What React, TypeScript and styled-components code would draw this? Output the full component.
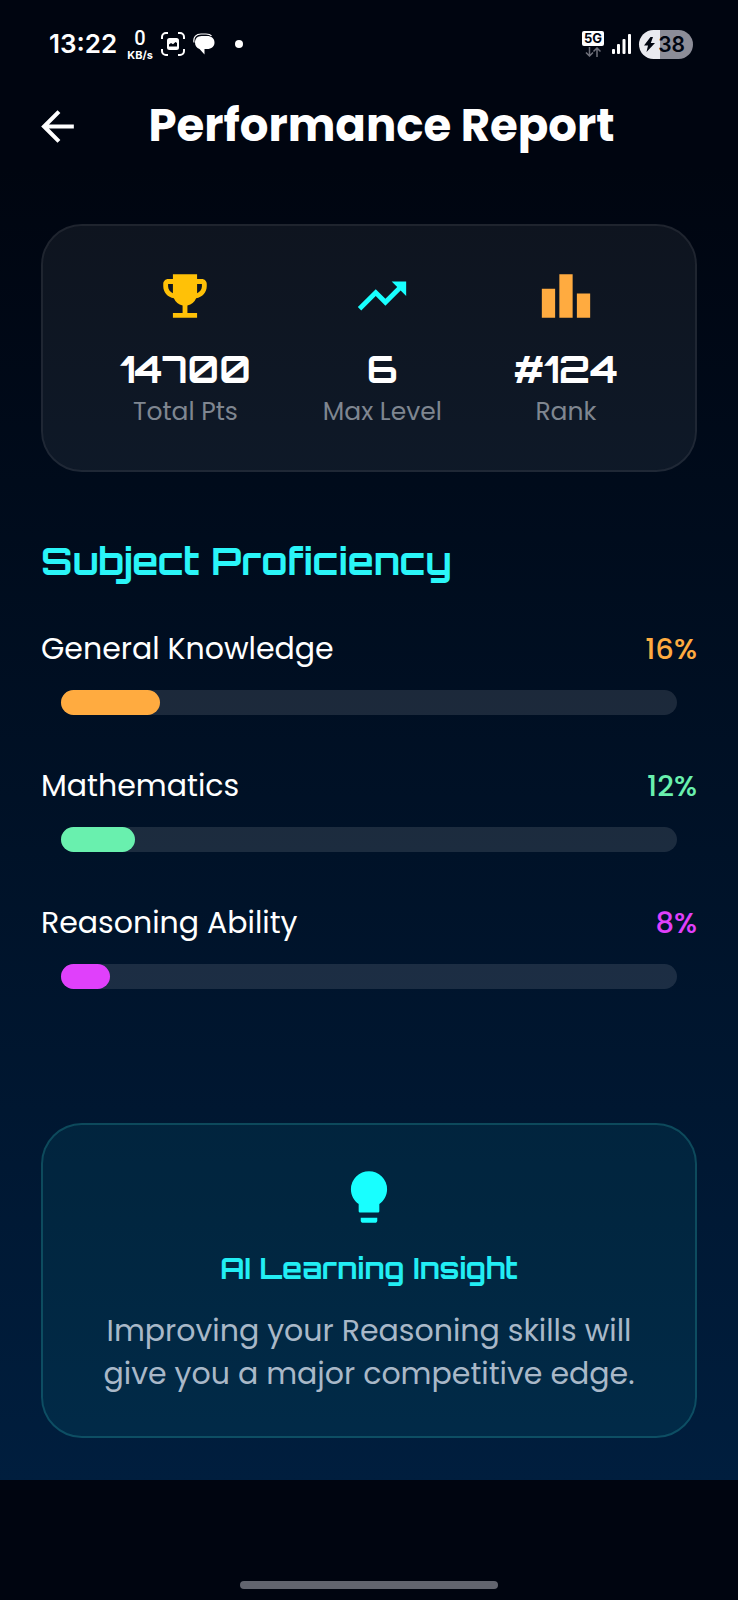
import React from 'react';
import styled, { createGlobalStyle } from 'styled-components';
import { MdArrowBack, MdEmojiEvents, MdLeaderboard, MdTrendingUp } from 'react-icons/md';

const bodyFont = 'Poppins, Inter, "Open Sans", sans-serif';
const displayFont = 'Orbitron, "DejaVu Sans", sans-serif';

const GlobalStyle = createGlobalStyle`
  *, *::before, *::after { box-sizing: border-box; }
  body { margin: 0; background: #000510; }
  h1, h2, h3, p, dl, dt, dd, ul { margin: 0; padding: 0; }
`;

const Screen = styled.div`
  display: flex;
  flex-direction: column;
  min-height: 100vh;
  background: #000510;
  color: #fff;
  font-family: ${bodyFont};
  font-weight: 400;
`;

const StatusBar = styled.div`
  display: flex;
  align-items: center;
  justify-content: space-between;
  height: 84px;
  padding: 4px 45px 0 49px;
`;

const StatusGroup = styled.div<{ $gap: number }>`
  display: flex;
  align-items: center;
  gap: ${(p) => p.$gap}px;

  svg { display: block; }
`;

const Clock = styled.span`
  font: 600 26px/32px Inter, sans-serif;
`;

const NetSpeed = styled.span`
  display: flex;
  flex-direction: column;
  align-items: center;
  margin-left: 2px;
  font: 700 11px/12px Inter, sans-serif;
`;

const NetValue = styled.span`
  font: 500 20px/22px Roboto, sans-serif;
`;

const Dot = styled.span`
  width: 8px;
  height: 8px;
  margin-left: 12px;
  border-radius: 50%;
  background: #fff;
`;

const Network = styled.span`
  display: flex;
  flex-direction: column;
  align-items: center;
  gap: 1px;
`;

const NetworkBadge = styled.span`
  width: 22px;
  border-radius: 2px;
  background: #fff;
  color: #000510;
  font: 700 13px/15px Inter, sans-serif;
  text-align: center;
`;

const Battery = styled.span`
  display: flex;
  align-items: center;
  justify-content: space-between;
  width: 54px;
  height: 29px;
  padding: 0 8px 0 5px;
  border-radius: 15px;
  background: linear-gradient(90deg, #e9eaf0 38%, #8c8d98 38%);
  color: #000510;
  font: 600 21px/29px Inter, sans-serif;
`;

const Header = styled.header`
  display: flex;
  align-items: center;
  height: 84px;
  padding: 0 57px 0 33px;
`;

const BackButton = styled.button`
  display: flex;
  padding: 0;
  border: 0;
  background: none;
  color: #fff;
  cursor: pointer;
`;

const Title = styled.h1`
  flex: 1;
  font: 700 45px/60px ${bodyFont};
  text-align: center;
  white-space: nowrap;
`;

const Main = styled.main`
  padding: 56px 41px 42px;
  background: linear-gradient(180deg, #000510, #001e3e);
`;

const Card = styled.section<{ $tone: 'glass' | 'accent' }>`
  padding: 41px;
  border: 2px solid ${(p) => (p.$tone === 'accent' ? 'rgba(60, 255, 240, 0.22)' : 'rgba(255, 255, 255, 0.12)')};
  border-radius: 41px;
  background: ${(p) => (p.$tone === 'accent' ? 'rgba(24, 255, 255, 0.06)' : 'rgba(235, 255, 255, 0.06)')};
  background-clip: padding-box;
`;

const StatList = styled.dl`
  display: flex;
  justify-content: space-around;
`;

const Stat = styled.div<{ $color: string }>`
  display: flex;
  flex-direction: column;
  align-items: center;

  svg {
    display: block;
    order: -2;
    margin-bottom: 20px;
    color: ${(p) => p.$color};
  }
`;

const StatLabel = styled.dt`
  margin-top: 2px;
  color: #7f8690;
  font-size: 25px;
  line-height: 34px;
`;

const StatValue = styled.dd`
  order: -1;
  font: 700 38px/48px ${displayFont};
`;

const SectionTitle = styled.h2`
  margin: 65px 0 42px;
  color: #2af5f8;
  font: 700 38px/48px ${displayFont};
`;

const SubjectList = styled.ul`
  display: flex;
  flex-direction: column;
  gap: 49px;
  margin-bottom: 134px;
  list-style: none;
`;

const SubjectHead = styled.div`
  display: flex;
  justify-content: space-between;
  margin-bottom: 19px;
  font-size: 30px;
  line-height: 44px;
`;

const Percent = styled.span<{ $color: string }>`
  color: ${(p) => p.$color};
  font-size: 29px;
  font-weight: 500;
`;

const Track = styled.div`
  height: 25px;
  margin: 0 20px;
  border-radius: 13px;
  background: rgba(255, 255, 255, 0.11);
`;

const Fill = styled.div<{ $color: string }>`
  height: 100%;
  border-radius: 13px;
  background: ${(p) => p.$color};
`;

const Insight = styled(Card)`
  display: flex;
  flex-direction: column;
  align-items: center;
  text-align: center;
`;

const InsightTitle = styled.h3`
  margin: 20px 0 21px;
  color: #22eef4;
  font: 700 29px/40px ${displayFont};
`;

const InsightText = styled.p`
  color: #a9b8c8;
  font-size: 30px;
  line-height: 43px;
`;

const GestureArea = styled.footer`
  display: flex;
  flex: 1;
  align-items: flex-end;
  justify-content: center;
  min-height: 100px;
  padding-bottom: 11px;
`;

const GestureHandle = styled.div`
  width: 35%;
  height: 8px;
  border-radius: 4px;
  background: #62656f;
`;

const stats = [
  { label: 'Total Pts', value: '14700', color: '#ffc107', Icon: MdEmojiEvents },
  { label: 'Max Level', value: '6', color: '#18ffff', Icon: MdTrendingUp },
  { label: 'Rank', value: '#124', color: '#ffab40', Icon: MdLeaderboard },
];

const subjects = [
  { name: 'General Knowledge', percent: 16, color: '#ffab40' },
  { name: 'Mathematics', percent: 12, color: '#69f0ae' },
  { name: 'Reasoning Ability', percent: 8, color: '#e040fb' },
];

const ScreenshotIcon = () => (
  <svg width="24" height="24" viewBox="0 0 24 24" fill="none" aria-hidden="true">
    <path d="M1 7V5a4 4 0 0 1 4-4h2M17 1h2a4 4 0 0 1 4 4v2M23 17v2a4 4 0 0 1-4 4h-2M7 23H5a4 4 0 0 1-4-4v-2" stroke="#fff" strokeWidth="2" />
    <rect x="6" y="6" width="12" height="12" rx="2.5" fill="#fff" />
    <path d="M8 14.5v-2l2-1.500 2 1.200 2.500-2.200 1.500 1v3.500z" fill="#000510" />
  </svg>
);

const ChatIcon = () => (
  <svg width="22" height="22" viewBox="0 0 22 22" aria-hidden="true">
    <path d="M1 9.500C0 4 3.500 1 8 1h5c2.500 0 4.500.6 5.500 1.800" fill="none" stroke="#fff" strokeWidth="1.200" />
    <path d="M8.500 3H14c4.500 0 7.500 2.500 7.500 6.500S18.500 16 14 16h-2.500v5.500L6.500 16C3.500 15 2 12.500 2 9.500 2 5.800 4.500 3 8.500 3z" fill="#fff" />
  </svg>
);

const DataArrows = () => (
  <svg width="16" height="10" viewBox="0 0 16 10" fill="none" stroke="#6f717b" strokeWidth="1.500" aria-hidden="true">
    <path d="M4.500 0v9M1 5.500 4.500 9 8 5.500M12 10V1M8.500 4.500 12 1l3.500 3.500" />
  </svg>
);

const SignalIcon = () => (
  <svg width="19" height="20" viewBox="0 0 19 20" fill="#fff" aria-hidden="true">
    <rect x="0" y="15" width="3" height="5" rx="1" />
    <rect x="5" y="10" width="3" height="10" rx="1" />
    <rect x="10.500" y="5" width="3" height="15" rx="1" />
    <rect x="16" y="0" width="3" height="20" rx="1" />
  </svg>
);

const BoltIcon = () => (
  <svg width="11" height="15" viewBox="0 0 11 15" fill="#000510" aria-hidden="true">
    <path d="M6.500 0 0 8.500h4L2.500 15 11 6H6.800L9 0z" />
  </svg>
);

const BulbIcon = () => (
  <svg width="62" height="62" viewBox="0 0 24 24" fill="#18ffff" aria-hidden="true">
    <path d="M12 2a7 7 0 0 0-7 7c0 2.400 1.200 4.500 3 5.700V17.500q0 .5.5.5h7q.5 0 .5-.5v-2.800c1.800-1.200 3-3.300 3-5.700a7 7 0 0 0-7-7z" />
    <path d="M8.800 20h6.400v1q0 1-1 1H9.800q-1 0-1-1z" />
  </svg>
);

export default function App() {
  return (
    <Screen>
      <GlobalStyle />
      <StatusBar>
        <StatusGroup $gap={8}>
          <Clock>13:22</Clock>
          <NetSpeed>
            <NetValue>0</NetValue>
            <span>KB/s</span>
          </NetSpeed>
          <ScreenshotIcon />
          <ChatIcon />
          <Dot />
        </StatusGroup>
        <StatusGroup $gap={8}>
          <Network>
            <NetworkBadge>5G</NetworkBadge>
            <DataArrows />
          </Network>
          <SignalIcon />
          <Battery>
            <BoltIcon />
            38
          </Battery>
        </StatusGroup>
      </StatusBar>

      <Header>
        <BackButton type="button" aria-label="Back">
          <MdArrowBack size={49} />
        </BackButton>
        <Title>Performance Report</Title>
      </Header>

      <Main>
        <Card $tone="glass">
          <StatList>
            {stats.map(({ label, value, color, Icon }) => (
              <Stat key={label} $color={color}>
                <Icon size={58} aria-hidden="true" />
                <StatLabel>{label}</StatLabel>
                <StatValue>{value}</StatValue>
              </Stat>
            ))}
          </StatList>
        </Card>

        <SectionTitle>Subject Proficiency</SectionTitle>
        <SubjectList>
          {subjects.map(({ name, percent, color }) => (
            <li key={name}>
              <SubjectHead>
                <span>{name}</span>
                <Percent $color={color}>{percent}%</Percent>
              </SubjectHead>
              <Track role="progressbar" aria-label={name} aria-valuenow={percent} aria-valuemin={0} aria-valuemax={100}>
                <Fill $color={color} style={{ width: `${percent}%` }} />
              </Track>
            </li>
          ))}
        </SubjectList>

        <Insight $tone="accent">
          <BulbIcon />
          <InsightTitle>AI Learning Insight</InsightTitle>
          <InsightText>Improving your Reasoning skills will give you a major competitive edge.</InsightText>
        </Insight>
      </Main>

      <GestureArea>
        <GestureHandle />
      </GestureArea>
    </Screen>
  );
}
